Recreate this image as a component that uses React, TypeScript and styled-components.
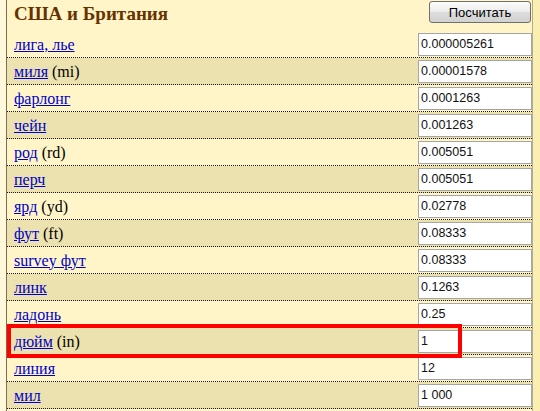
import { createGlobalStyle, styled } from "styled-components";

// базовые стили страницы
const GlobalStyle = createGlobalStyle`
    html, body {
        margin: 0;
        padding: 0;
        background-color: #FFF8DA;
    }
`;

const Page = styled.div`
    display: flex;
    width: 540px;
    height: 411px;
    overflow: hidden;
`;

const Gutter = styled.div`
    width: 6px;
    flex-shrink: 0;
    background-color: #FFF8DA;
`;

const Panel = styled.div`
    width: 525px;
    flex-shrink: 0;
    border-left: 1px solid #7d6e50;
    border-right: 1px solid #b3ab93;
    background-color: #FFF5C8;
`;

const RightStrip = styled.div`
    flex: 1;
    background-color: #FAEFB0;
`;

const Header = styled.div`
    height: 31px;
    display: flex;
    justify-content: space-between;
    align-items: flex-start;
`;

const Title = styled.h2`
    margin: 2px 0 0 7px;
    font-family: "Liberation Serif", "Times New Roman", serif;
    font-size: 19px;
    font-weight: bold;
    line-height: 23px;
    color: #663300;
`;

const CalcButton = styled.button`
    width: 102px;
    height: 22px;
    margin: 1px 1px 0 0;
    padding: 0;
    border: 1px solid #6f6f6f;
    border-radius: 3px;
    background: linear-gradient(#fcfcfc 0%, #ececec 48%, #dcdcdc 52%, #d2d2d2 100%);
    font-family: "Liberation Sans", Arial, sans-serif;
    font-size: 13px;
    color: #000;
`;

const List = styled.div`
    display: flex;
    flex-direction: column;
`;

const Row = styled.div<{ $alt: boolean }>`
    position: relative;
    height: 26px;
    display: flex;
    align-items: center;
    justify-content: space-between;
    padding-left: 7px;
    border-bottom: 1px dotted #1a1a1a;
    background-color: ${p => (p.$alt ? "#EBE2AF" : "#FFF5C8")};
`;

const Label = styled.span`
    padding-top: 1px;
    font-family: "Liberation Serif", "Times New Roman", serif;
    font-size: 16px;
    color: #000;
`;

const UnitLink = styled.a`
    color: #0000cc;
    text-decoration: underline;
    cursor: pointer;
`;

const ValueInput = styled.input`
    box-sizing: border-box;
    width: 114px;
    height: 23px;
    margin: 0;
    padding: 0 2px;
    border: 1px solid #a5a5a5;
    background-color: #fff;
    font-family: "Liberation Sans", Arial, sans-serif;
    font-size: 12.5px;
    color: #111;
    outline: none;
`;

const Highlight = styled.div`
    position: absolute;
    left: 0;
    top: -4px;
    width: 455px;
    height: 34px;
    box-sizing: border-box;
    border: 4px solid #ff0000;
    pointer-events: none;
    z-index: 2;
`;

type Unit = {
    name: string;
    abbr?: string;
    value: string;
    marked?: boolean;
};

const units: Unit[] = [
    { name: "лига, лье", value: "0.000005261" },
    { name: "миля", abbr: "mi", value: "0.00001578" },
    { name: "фарлонг", value: "0.0001263" },
    { name: "чейн", value: "0.001263" },
    { name: "род", abbr: "rd", value: "0.005051" },
    { name: "перч", value: "0.005051" },
    { name: "ярд", abbr: "yd", value: "0.02778" },
    { name: "фут", abbr: "ft", value: "0.08333" },
    { name: "survey фут", value: "0.08333" },
    { name: "линк", value: "0.1263" },
    { name: "ладонь", value: "0.25" },
    { name: "дюйм", abbr: "in", value: "1", marked: true },
    { name: "линия", value: "12" },
    { name: "мил", value: "1 000" },
];

export default function App() {
    return (
        <>
            <GlobalStyle />
            <Page>
                <Gutter />
                <Panel>
                    <Header>
                        <Title>США и Британия</Title>
                        <CalcButton>Посчитать</CalcButton>
                    </Header>
                    <List>
                        {units.map((u, i) => (
                            <Row key={u.name} $alt={i % 2 === 1}>
                                <Label>
                                    <UnitLink>{u.name}</UnitLink>
                                    {u.abbr && ` (${u.abbr})`}
                                </Label>
                                <ValueInput defaultValue={u.value} />
                                {u.marked && <Highlight />}
                            </Row>
                        ))}
                    </List>
                </Panel>
                <RightStrip />
            </Page>
        </>
    );
}
